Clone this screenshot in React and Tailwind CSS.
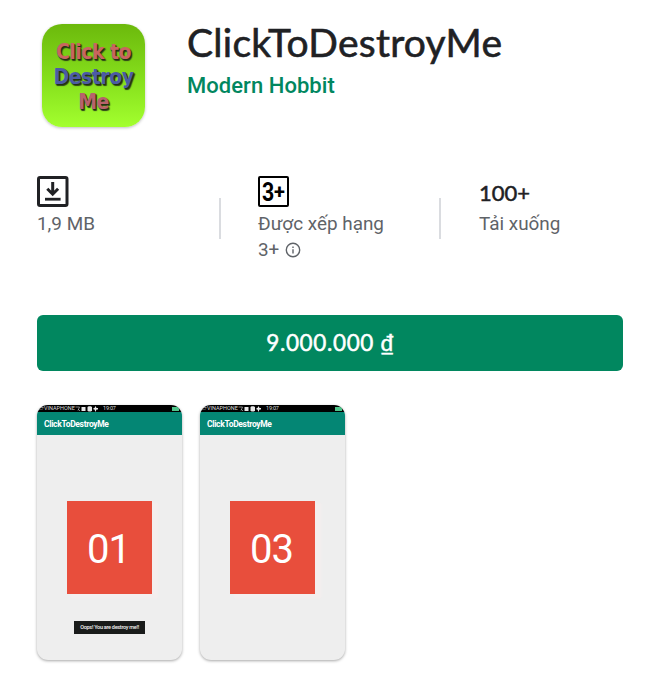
function AppIcon() {
  return (
    <div className="flex h-[103px] w-[103px] shrink-0 flex-col items-center rounded-[20px] bg-linear-to-b from-[#6cb90c] via-[#86e01c] via-55% to-[#a3ff2e] pt-[16px] font-['DejaVu_Sans_Condensed','DejaVu_Sans',sans-serif] text-[21px] leading-[25px] font-bold tracking-[-0.5px] shadow-[0_1px_3px_rgba(0,0,0,0.25)] [font-stretch:condensed] [text-shadow:1px_1px_1px_#1d3010,1.5px_1.5px_1px_#33451c]">
      <span className="whitespace-nowrap text-[#c9655f]">Click to</span>
      <span className="whitespace-nowrap text-[#4c5ba4]">Destroy</span>
      <span className="whitespace-nowrap text-[#b8626c]">Me</span>
    </div>
  );
}

function DownloadIcon() {
  return (
    <svg className="block h-[31px] w-8" viewBox="0 0 32 31" fill="none" stroke="#202124">
      <rect x="1.5" y="1.5" width="28.5" height="28" rx="1.5" strokeWidth="3" />
      <path d="M15.7 6v12M10.3 12.8l5.4 5.4 5.4-5.4" strokeWidth="3" />
      <path d="M8 23.2h15.6" strokeWidth="2.8" />
    </svg>
  );
}

function InfoIcon() {
  return (
    <svg className="block h-4 w-4" viewBox="0 0 16 16" fill="none" stroke="#5f6368" strokeWidth="1.4">
      <circle cx="8" cy="8" r="6.7" />
      <path d="M8 7.2v4.3M8 4.4v1.5" />
    </svg>
  );
}

function StatusIcons() {
  return (
    <svg className="block h-[6px] w-6 shrink-0" viewBox="0 0 24 6" fill="#e8e8e8">
      <path d="M1.500 1h4L4 4.500M4 3l2 2" fill="none" stroke="#bbb" strokeWidth="0.7" />
      <rect x="7.5" y="1" width="4" height="4" />
      <path d="M13.500 1l1.200-.7h2L18 1v3.400l-1 1h-2.500l-1-1z" />
      <path d="M21.500 0l1 2H24v1.500h-1.500L21.500 6l-1-2.500H19.500V2h1z" />
    </svg>
  );
}

function Screenshot({ number, toast }) {
  return (
    <div className="flex h-[255px] w-[145px] flex-col overflow-hidden rounded-[11px] bg-[#eeeeee] shadow-[0_1px_3px_rgba(0,0,0,0.35)]">
      <div className="flex h-[7px] shrink-0 items-center bg-black pl-[2px] text-[5.5px] leading-[7px] text-[#dddddd]">
        <span className="w-[35px] whitespace-nowrap">▱VINAPHONE</span>
        <StatusIcons />
        <span className="ml-[5px] tracking-[-0.2px]">19:07</span>
        <span className="mr-[3px] ml-auto h-[4px] w-[7px] bg-[#4fc58b]" />
      </div>
      <div className="h-[23px] shrink-0 bg-[#048674] pl-[7px] text-[8.5px] leading-[24px] font-bold text-white">
        <span className="tracking-[-0.32px]">ClickToDestroyMe</span>
      </div>
      <div className="mt-[66px] ml-[30px] flex h-[93px] w-[85px] shrink-0 items-center justify-center bg-[#e84e3c] pr-[2px] pt-[4px] text-[40px] leading-none tracking-[-1px] text-white shadow-[5px_3px_2px_1px_#f4eeee]">
        {number}
      </div>
      {toast && (
        <div className="mt-[27px] ml-[37px] flex h-[13px] w-[71px] items-center justify-center bg-[#191b1a] text-[5.5px] font-medium tracking-[-0.28px] whitespace-nowrap text-[#f4f4f4]">
          {toast}
        </div>
      )}
    </div>
  );
}

export default function App() {
  return (
    <main className="h-[689px] w-[660px] overflow-hidden bg-white px-[37px] pt-6 font-[Roboto,sans-serif] text-[#5f6368]">
      <header className="flex h-[152px] pl-[5px]">
        <AppIcon />
        <div className="pl-[42px]">
          <h1 className="h-[46px] font-[Lato,sans-serif] text-[39px] leading-[36px] tracking-[0.27px] whitespace-nowrap text-[#202124] [-webkit-text-stroke:0.6px_#202124]">
            ClickToDestroyMe
          </h1>
          <p className="text-[22px] leading-[32px] font-medium tracking-[0.05px] text-[#01875f]">Modern Hobbit</p>
        </div>
      </header>

      <section className="flex h-[139px] text-[18.9px] leading-[26px]">
        <div className="w-[182px]">
          <DownloadIcon />
          <p className="mt-[4px]">1,9 MB</p>
        </div>
        <div className="mt-[22px] h-[41px] w-[2px] bg-[#dadce0]" />
        <div className="w-[218px] pl-[37px]">
          <div className="flex h-[31px] w-[31px] items-center justify-center rounded-[2px] border-2 border-black font-bold text-black">
            <span className="w-[12px] origin-left scale-x-[0.82] text-[26px]">3</span>
            <span className="w-[11px] text-[20px]">+</span>
          </div>
          <p className="mt-[4px] whitespace-nowrap">Được xếp hạng</p>
          <p className="flex items-center gap-[6px]">
            3+ <InfoIcon />
          </p>
        </div>
        <div className="mt-[22px] h-[41px] w-[2px] bg-[#dadce0]" />
        <div className="pl-[38px]">
          <p className="mt-[4px] h-[31px] font-[Lato,sans-serif] text-[22px] text-[#202124] [-webkit-text-stroke:0.5px_#202124]">
            100+
          </p>
          <p className="whitespace-nowrap">Tải xuống</p>
        </div>
      </section>

      <button className="flex h-[56px] w-[586px] items-center justify-center rounded-[6px] bg-[#01875f] pl-[1px] font-[Lato,sans-serif] text-[22.5px] tracking-[0.65px] text-white [-webkit-text-stroke:0.5px_white]">
        9.000.000 ₫
      </button>

      <section className="mt-[34px] flex gap-[18px]">
        <Screenshot number="01" toast="Oops! You are destroy me!!" />
        <Screenshot number="03" />
      </section>
    </main>
  );
}
